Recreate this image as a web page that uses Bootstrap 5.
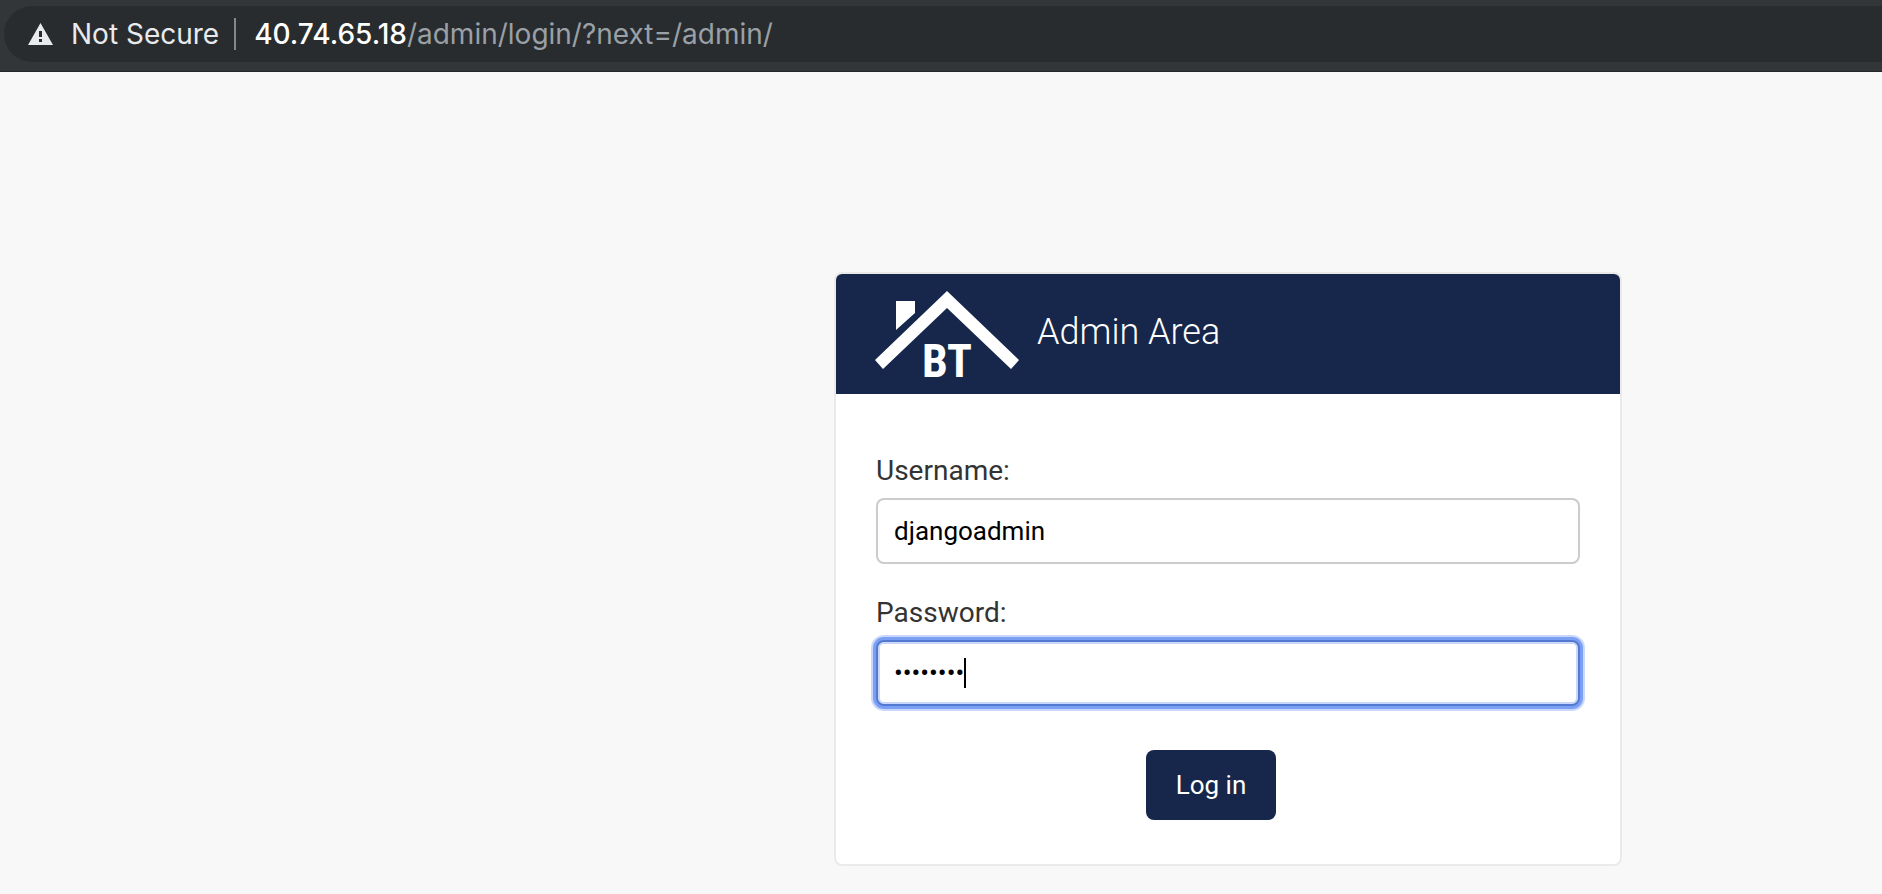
<!DOCTYPE html>
<html lang="en">
<head>
<meta charset="utf-8">
<meta name="viewport" content="width=device-width, initial-scale=1">
<title>Log in | Admin Area</title>
<link href="https://cdn.jsdelivr.net/npm/bootstrap@5.3.0/dist/css/bootstrap.min.css" rel="stylesheet">
<style>
  body { background: #f8f8f8; font-family: Roboto, "Liberation Sans", sans-serif; }
  .toolbar { background: #323639; padding: 6px 0 9px 4px; border-bottom: 1px solid #242629; }
  .omnibox { background: #282c2f; height: 56px; border-radius: 28px 0 0 28px; padding-left: 24px;
    font: 28px/36px Inter, sans-serif; color: #e8eaed; }
  .omnibox svg { margin-right: 18px; }
  .divider { width: 2px; height: 32px; background: #85888a; margin: 0 18px 0 15px; }
  .address { color: #9aa0a6; }
  .address b { color: #fff; font-weight: 500; }
  .login-area { padding: 200px 260px 28px 24px; }
  .login-card { width: 788px; border: 2px solid #eaeaea; border-radius: 8px; }
  .login-head { background: #17274b; height: 120px; padding: 0 39px; gap: 18px; border-radius: 6px 6px 0 0; }
  .login-head h1 { font-size: 36px; font-weight: 300; line-height: 44px; color: #fff; }
  .login-form { padding: 56px 40px 44px; }
  .login-form label { font-size: 28px; line-height: 42px; color: #333; margin-bottom: 6px; }
  .login-form .form-control { height: 66px; border: 2px solid #ccc; border-radius: 8px; padding: 0 16px;
    font-size: 26px; color: #000; box-shadow: none; }
  .login-form .form-control.active-field { border-color: #5379d0; caret-color: transparent;
    box-shadow: 0 0 0 3px #7b9ff2, 0 0 0 5px #c9d8fa, inset 0 0 0 2px #c9d8fa; }
  .caret { left: 88px; top: 18px; width: 2px; height: 30px; background: #000; }
  .second-row { margin-top: 28px; }
  .submit-row { margin-top: 44px; padding-right: 34px; }
  .btn-login { background: #17274b; color: #fff; width: 130px; height: 70px; border-radius: 8px; font-size: 26px; padding: 0; }
  .btn-login:hover { background: #223866; color: #fff; }
</style>
</head>
<body>
<header class="toolbar">
  <div class="omnibox d-flex align-items-center text-nowrap overflow-hidden">
    <svg width="25" height="22" viewBox="0 0 25 22" aria-hidden="true"><path fill="#e8eaed" fill-rule="evenodd" d="M12.500 0 25 22H0ZM11 8v6h3V8Zm0 8v3h3v-3Z"/></svg>
    <span>Not Secure</span>
    <span class="divider"></span>
    <span class="address"><b>40.74.65.18</b>/admin/login/?next=/admin/</span>
  </div>
</header>
<main class="login-area d-flex justify-content-end">
  <div class="login-card card">
    <div class="login-head d-flex align-items-center">
      <svg class="overflow-visible" width="144" height="104" viewBox="0 -9 144 104" role="img" aria-label="BT">
        <g fill="#fff">
          <path d="M0 69 72 0 144 69 136 78 72 17 8 78Z"/>
          <path d="M21 10H40V22L21 39Z"/>
          <text x="72" y="86" text-anchor="middle" font-family="'Liberation Sans Narrow', 'Roboto Condensed', 'Open Sans Condensed', 'Liberation Sans', sans-serif" font-weight="700" font-size="46">BT</text>
        </g>
      </svg>
      <h1 class="mb-1">Admin Area</h1>
    </div>
    <form class="login-form">
      <div>
        <label for="username" class="d-block">Username:</label>
        <input id="username" class="form-control" type="text" value="djangoadmin">
      </div>
      <div class="second-row">
        <label for="password" class="d-block">Password:</label>
        <div class="position-relative">
          <input id="password" class="form-control active-field" type="password" value="password">
          <span class="caret position-absolute"></span>
        </div>
      </div>
      <div class="submit-row d-flex justify-content-center">
        <button class="btn btn-login" type="submit">Log in</button>
      </div>
    </form>
  </div>
</main>
<script src="https://cdn.jsdelivr.net/npm/bootstrap@5.3.0/dist/js/bootstrap.bundle.min.js"></script>
</body>
</html>
